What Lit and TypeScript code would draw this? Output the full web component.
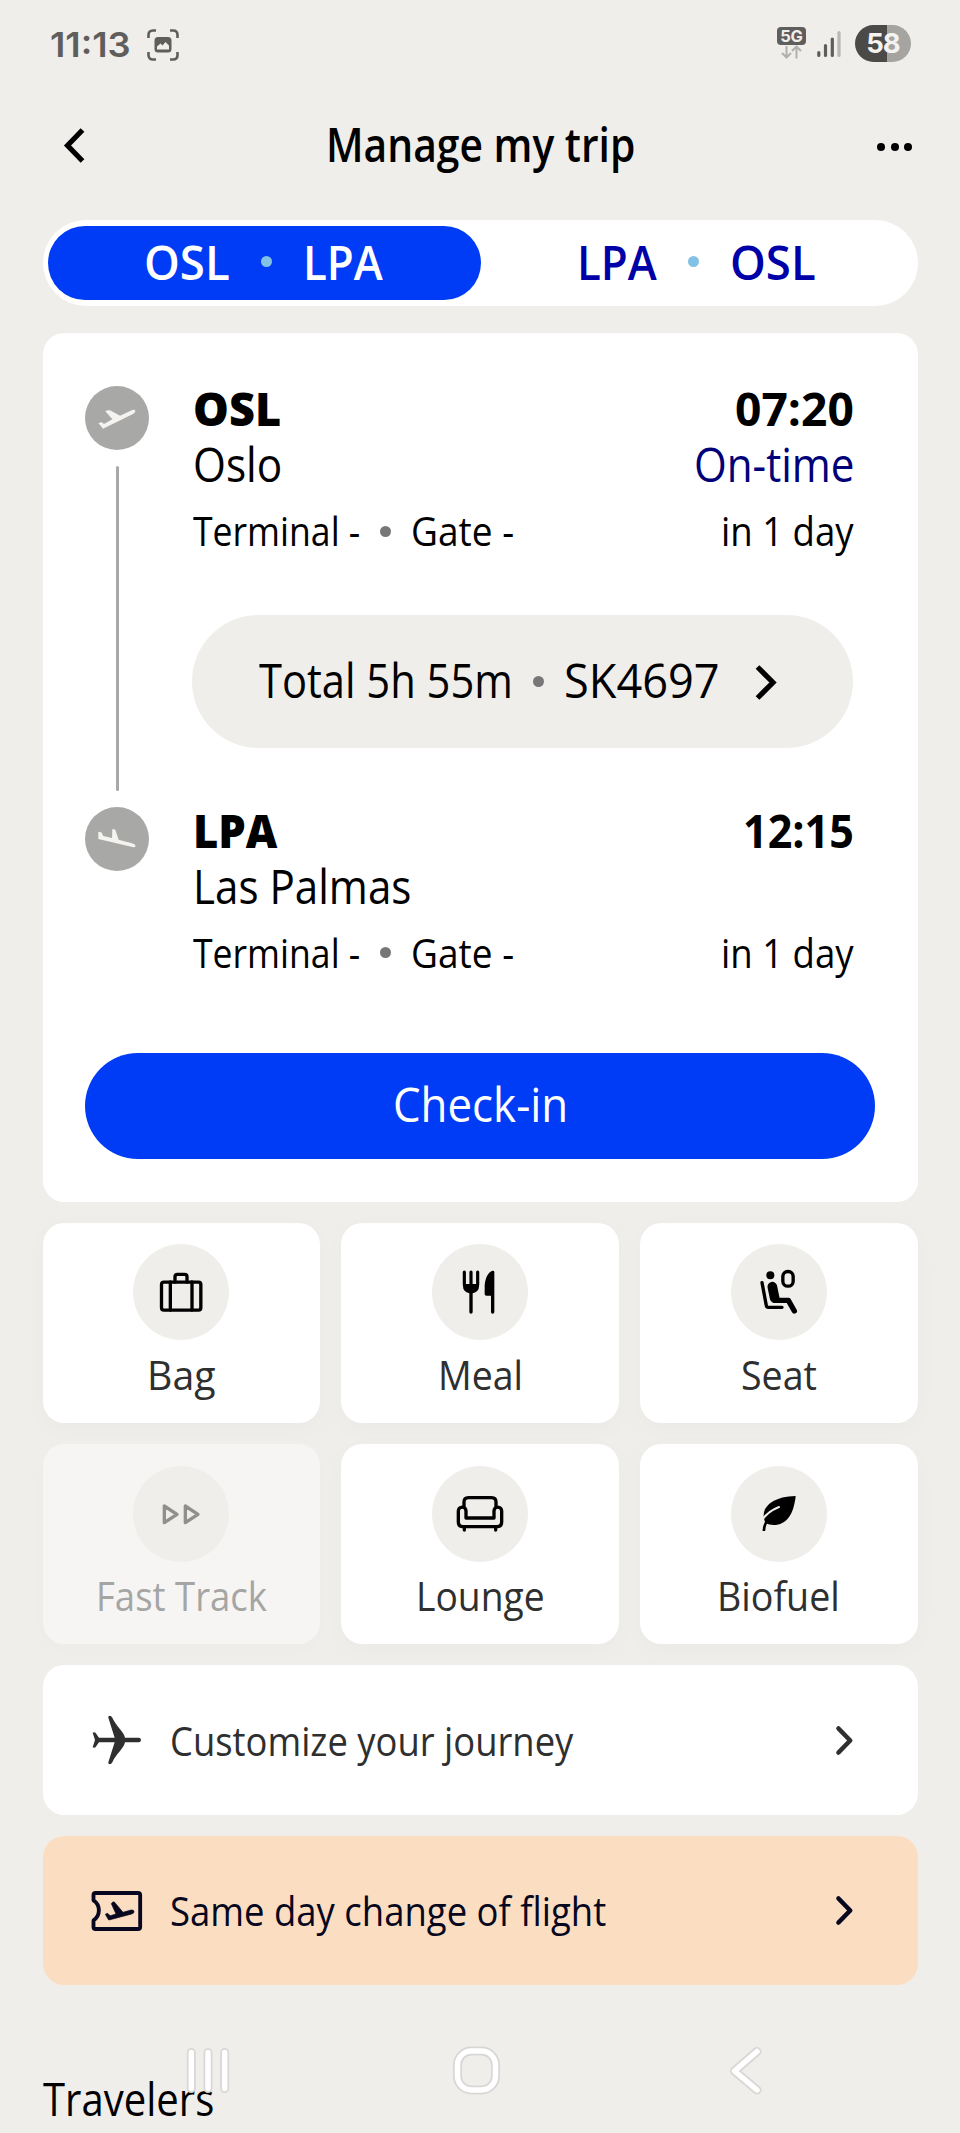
import { LitElement, html, svg, css } from "lit";
import { customElement, property } from "lit/decorators.js";
import { classMap } from "lit/directives/class-map.js";

const base = css`
  * { box-sizing: border-box; }
  svg { display: block; overflow: visible; }
`;

const stroke = (d: string, w: number) =>
  svg`<path d=${d} fill="none" stroke="currentColor" stroke-width=${w} stroke-linecap="round" stroke-linejoin="round"/>`;

// All glyphs share a coordinate system centred on 0,0 with three units per pixel.
const ICONS: Record<string, unknown> = {
  bag: svg`<rect x="-58.5" y="-29.5" width="118" height="84" rx="7" fill="none" stroke="currentColor" stroke-width="10"/>
    ${stroke("M-18 -30V-46Q-18 -53 -11 -53H11Q18 -53 18 -46V-30M-32 -30V54M33 -30V54", 10)}`,
  meal: svg`${stroke("M-47 -60V-22M-27 -60V-22M-7 -60V-22", 9.5)}
    <path d="M-51 -24H-3V-17Q-3 0 -22 3.500V60Q-22 65 -27 65Q-32 65 -32 60V3.500Q-51 0 -51 -17Z" fill="currentColor"/>
    <path d="M43 -60Q43 -64 38 -64C23 -60 14 -38 14 -15V6Q14 11 19 11H33V60Q33 65 38 65Q43 65 43 60Z" fill="currentColor"/>`,
  seat: svg`<circle cx="-26" cy="-50" r="12" fill="currentColor"/>
    <rect x="11.500" y="-61.500" width="31" height="44" rx="15" fill="none" stroke="currentColor" stroke-width="10"/>
    ${stroke("M-51 -28L-38 41Q-37 46 -32 46H9", 10)}
    ${stroke("M-20 -16L-13 18", 29)}
    ${stroke("M-14 25H28L46 57", 16)}`,
  track: svg`${stroke("M-50 -24V26L-12 1ZM13 -24V26L51 1Z", 10)}`,
  lounge: svg`${stroke("M-48 -21V-36Q-48 -49 -35 -49H35Q48 -49 48 -36V-21", 10)}
    ${stroke("M-42 12V-9A11.500 11.500 0 0 0 -65 -9V24Q-65 38 -51 38H51Q65 38 65 24V-9A11.500 11.500 0 0 0 42 -9V12Z", 10)}
    ${stroke("M-47 40V48M47 40V48", 10)}`,
  leaf: svg`<path d="M50 -54C44 2 22 33 -16 33Q-30 33 -40 28C-62 -16 -22 -53 50 -54Z" fill="currentColor"/>
    <path d="M-54 24C-42 2 -18 -14 0 -21" fill="none" stroke="#f0eeeb" stroke-width="6" stroke-linecap="round"/>
    <path d="M-45.500 51C-45 38 -42 28 -34 18" fill="none" stroke="currentColor" stroke-width="8"/>`,
  plane: svg`<path fill="currentColor" d="M-54 -7H-7L-26 -67Q-27 -73 -22 -73Q-17 -73 -14 -67C-3 -42 21 -25 24 -7H65A7 7 0 0 1 65 7H24C21 25 -3 42 -14 67Q-17 73 -22 73Q-27 73 -26 67L-7 7H-54L-64 21Q-68 25 -73 22L-66 0L-73 -22Q-68 -25 -64 -21Z"/>`,
  ticket: svg`${stroke("M-70.500 -32V-48Q-70.500 -54 -64 -54H63Q69.500 -54 69.500 -48V48Q69.500 54 63 54H-64Q-70.500 54 -70.500 48V28C-49 14 -49 -18 -70.500 -32Z", 11.5)}
    <path fill="currentColor" stroke="currentColor" stroke-width="2" d="M-35 10L-29 7L-20 14L-3 9L-17 -22Q-13 -29 -8 -27L18 4L42 -3Q50 -4 51 1Q52 7 44 9L-24 27Q-28 25 -28 22Z"/>`,
  takeoff: svg`<path fill="currentColor" d="M-56 15L-45 13L-39 18L-14 4L-35 -20Q-28 -25 -21 -23L9 -7L46 -24Q56 -26 55 -20Q54 -15 48 -12L-42 32Z"/>`,
  landing: svg`<path fill="currentColor" d="M-56 -22L-47 -20L-41 -9L-15 -3L-14 -29Q-9 -31 -5 -27L5 2L45 13Q56 17 56 21Q54 26 46 24L-56 0Z"/>`,
};

// A single line of text set narrow or wide so that it fills the given width.
@customElement("fit-text")
class FitText extends LitElement {
  @property({ type: Number }) width = 0;
  @property() text = "";
  static styles = css`
    :host { display: block; flex: none; }
    .box { display: block; }
    .line { display: inline-block; white-space: nowrap; transform-origin: 0 50%; vertical-align: top; }
  `;
  render() {
    return html`<span class="box" style="width:${this.width}px"><span class="line">${this.text}</span></span>`;
  }
  updated() {
    const line = this.renderRoot.querySelector(".line") as HTMLElement;
    const natural = line.offsetWidth;
    if (natural) line.style.transform = `scaleX(${this.width / natural})`;
  }
}

const fit = (text: string, width: number) => html`<fit-text .text=${text} .width=${width}></fit-text>`;

@customElement("trip-icon")
class TripIcon extends LitElement {
  @property() name = "";
  static styles = [base, css`:host { display: block; width: 96px; height: 96px; }`];
  render() {
    return html`<svg width="96" height="96" viewBox="-144 -144 288 288">${ICONS[this.name]}</svg>`;
  }
}

@customElement("status-bar")
class StatusBar extends LitElement {
  static styles = [base, css`
    :host { display: flex; justify-content: space-between; align-items: flex-start; height: 102px; padding: 25px 49px 0 50px; color: #5f5e5c; font-family: Inter, sans-serif; }
    .side { display: flex; align-items: flex-start; }
    .time { font-size: 34.500px; font-weight: 600; line-height: 40px; width: 97px; }
    .shot { margin-top: 4px; }
    .net { width: 29px; margin-top: 2px; }
    .five { height: 18px; border-radius: 4px; background: #5f5e5c; color: #f0eeeb; font-size: 16.500px; font-weight: 700; line-height: 18px; text-align: center; letter-spacing: -0.300px; }
    .signal { margin: 5px 0 0 11px; }
    .battery { width: 56px; height: 37px; margin-left: 14px; border-radius: 19px; background: linear-gradient(90deg, #4b4a48 57%, #a5a4a1 57%); color: #f4f3f0; font-size: 27.500px; font-weight: 700; line-height: 37px; text-align: center; letter-spacing: -1px; }
  `];
  render() {
    return html`
      <div class="side">
        <div class="time">${fit("11:13", 81)}</div>
        <svg class="shot" width="32" height="32" viewBox="0 0 32 32">
          <path d="M1.500 9V6Q1.500 1.500 6 1.500H9M23 1.500H26Q30.500 1.500 30.500 6V9M30.500 23V26Q30.500 30.500 26 30.500H23M9 30.500H6Q1.500 30.500 1.500 26V23" fill="none" stroke="#5f5e5c" stroke-width="2.600"/>
          <rect x="7.500" y="8" width="17" height="15.500" rx="3.500" fill="#5f5e5c"/>
          <path d="M10 20.500V17.500L13.500 14.500L15.500 16.500L18.500 13L22 16.500V20.500Z" fill="#f0eeeb"/>
        </svg>
      </div>
      <div class="side">
        <div class="net">
          <div class="five">5G</div>
          <svg width="29" height="14" viewBox="0 0 29 14">
            <path d="M9.500 1V12M5 8L9.500 12.500L14 8M19.500 13.500V2M15 6L19.500 1.500L24 6" fill="none" stroke="#b1b0ad" stroke-width="2"/>
          </svg>
        </div>
        <svg class="signal" width="24" height="28" viewBox="0 0 24 28">
          <g stroke-width="3.200" stroke-linecap="round">
            <path d="M1.800 22.500V25.500M8.500 15.500V25.500M15.300 9V25.500" stroke="#5f5e5c"/>
            <path d="M22 2.500V25.500" stroke="#b9b8b5"/>
          </g>
        </svg>
        <div class="battery">58</div>
      </div>`;
  }
}

@customElement("trip-stop")
class TripStop extends LitElement {
  @property({ type: Object }) stop: any = {};
  static styles = [base, css`
    :host { display: flex; height: 177px; }
    .disc { width: 64px; height: 64px; margin: 5.500px 43.500px 0 0; display: flex; align-items: center; justify-content: center; border-radius: 50%; background: #a8a8a7; color: #f4f3ef; flex: none; }
    .rows { width: 661px; }
    .row { display: flex; justify-content: space-between; align-items: center; height: 56px; line-height: 56px; font-size: 46.600px; }
    .code { font-weight: 800; }
    .time { font-weight: 700; }
    .status { color: #000078; }
    .meta { height: 54px; line-height: 54px; font-size: 41px; margin-top: 11px; }
    .where { display: flex; align-items: center; }
    .dot { width: 11px; height: 11px; border-radius: 50%; background: #777; margin: 2px 20px 0 20px; }
  `];
  render() {
    const s = this.stop;
    return html`
      <div class="disc"><trip-icon name=${s.icon}></trip-icon></div>
      <div class="rows">
        <div class="row"><div class="code">${fit(s.code[0], s.code[1])}</div><div class="time">${fit(s.time[0], s.time[1])}</div></div>
        <div class="row">${fit(s.city[0], s.city[1])}${s.status ? html`<div class="status">${fit(s.status[0], s.status[1])}</div>` : ""}</div>
        <div class="row meta">
          <div class="where">${fit("Terminal -", 167.5)}<i class="dot"></i>${fit("Gate -", 103)}</div>
          ${fit("in 1 day", 133)}
        </div>
      </div>`;
  }
}

@customElement("app-root")
class AppRoot extends LitElement {
  static styles = [base, css`
    :host { display: block; position: relative; width: 960px; height: 2133px; overflow: hidden; background: #f0eeeb; color: #000; font-family: "Open Sans", "Noto Sans", sans-serif; }
    .head { display: grid; grid-template-columns: 150px 1fr 150px; align-items: center; justify-items: start; height: 86px; padding: 0 48px 0 64px; }
    .title { font-size: 46.600px; font-weight: 600; line-height: 60px; justify-self: center; margin: -2px 15px 0 0; }
    .more { display: flex; gap: 5.300px; justify-self: end; margin-top: 4px; }
    .more i { width: 8px; height: 8px; border-radius: 50%; background: #000; }
    .tabs { display: flex; margin: 32px 42.500px 0; height: 85.500px; padding: 5.500px; border-radius: 43px; background: #fff; }
    .tab { flex: 1; display: flex; align-items: center; justify-content: center; border-radius: 38px; font-size: 46.600px; font-weight: 600; line-height: 74px; color: #0000a8; padding-bottom: 2px; }
    .tab.on { background: #003cf6; color: #fff; padding-right: 2px; }
    .tab i { width: 11px; height: 11px; margin: 0 31px; border-radius: 50%; background: #82c2e4; }
    .card { margin: 27px 42.500px 0; height: 869px; padding: 47.500px 42.500px 0; border-radius: 21.300px; background: #fff; }
    .between { display: flex; height: 244.500px; }
    .rail { width: 2.700px; height: 325px; margin: -91.500px 73.500px 0 31px; border-radius: 2px; background: #a8a8a7; flex: none; }
    .flight { display: flex; align-items: center; width: 661px; height: 133px; margin-top: 58px; padding: 0 76px 4px 67px; border-radius: 67px; background: #f0eeeb; font-size: 46.600px; line-height: 60px; }
    .flight i { width: 11px; height: 11px; border-radius: 50%; background: #777; margin: 4px 20.500px 0 19.500px; }
    .flight svg { margin: 5px 0 0 auto; }
    .checkin { display: flex; align-items: center; justify-content: center; height: 106.600px; margin-top: 74px; padding-bottom: 4px; border-radius: 54px; background: #003cf6; color: #fff; font-size: 46.600px; font-weight: 500; line-height: 60px; }
    .grid { display: grid; grid-template-columns: repeat(3, 1fr); gap: 21.300px; margin: 21.300px 42.500px 0; }
    .tile { height: 200px; padding-top: 21.500px; display: flex; flex-direction: column; align-items: center; border-radius: 21.300px; background: #fff; font-size: 41px; line-height: 54px; color: #2f2f30; box-shadow: 0 6px 24px rgba(0, 0, 0, 0.022); }
    .tile.off { background: #f6f5f4; color: #a5a5a4; box-shadow: 0 6px 24px rgba(0, 0, 0, 0.012); }
    .round { width: 96px; height: 96px; margin-bottom: 6.500px; border-radius: 50%; background: #f0eeeb; color: #000; }
    .tile.off .round { color: #8f8f8e; }
    .link { display: flex; align-items: center; height: 149.300px; margin: 21.300px 42.500px 0; padding: 0 64.500px 0 26.500px; border-radius: 21.300px; background: #fff; color: #2f2f30; font-size: 41px; line-height: 54px; }
    .link.warm { background: #fbdec1; color: #070720; }
    .name { margin: -1px auto 0 5px; }
    .people { margin: 83px 0 0 42.500px; font-size: 46px; line-height: 60px; }
    .system { position: absolute; left: 0; top: 2040px; }
  `];

  render() {
    const tiles: [string, string, number, boolean][] = [
      ["bag", "Bag", 69, false], ["meal", "Meal", 85, false], ["seat", "Seat", 76, false],
      ["track", "Fast Track", 171, true], ["lounge", "Lounge", 129, false], ["leaf", "Biofuel", 123, false],
    ];
    const links: [string, string, number, boolean][] = [
      ["plane", "Customize your journey", 403, false],
      ["ticket", "Same day change of flight", 436, true],
    ];
    const from = { code: ["OSL", 88], city: ["Oslo", 89], time: ["07:20", 119], status: ["On-time", 160], icon: "takeoff" };
    const to = { code: ["LPA", 84], city: ["Las Palmas", 218], time: ["12:15", 111], icon: "landing" };
    return html`
      <status-bar></status-bar>
      <div class="head">
        <svg width="21" height="35" viewBox="0 0 21 35"><path d="M18.500 2L3.500 17.500L18.500 33" fill="none" stroke="#000" stroke-width="5.200"/></svg>
        <div class="title">${fit("Manage my trip", 309)}</div>
        <div class="more"><i></i><i></i><i></i></div>
      </div>
      <div class="tabs">
        <div class="tab on">${fit("OSL", 86)}<i></i>${fit("LPA", 80)}</div>
        <div class="tab">${fit("LPA", 80)}<i></i>${fit("OSL", 86)}</div>
      </div>
      <section class="card">
        <trip-stop .stop=${from}></trip-stop>
        <div class="between">
          <div class="rail"></div>
          <div class="flight">
            ${fit("Total 5h 55m", 254)}<i></i>${fit("SK4697", 156)}
            <svg width="22" height="35" viewBox="0 0 22 35"><path d="M2.500 2L18 17.500L2.500 33" fill="none" stroke="#000" stroke-width="5.200"/></svg>
          </div>
        </div>
        <trip-stop .stop=${to}></trip-stop>
        <div class="checkin">${fit("Check-in", 175)}</div>
      </section>
      <div class="grid">
        ${tiles.map(([icon, label, width, off]) => html`
          <div class=${classMap({ tile: true, off })}>
            <div class="round"><trip-icon name=${icon}></trip-icon></div>
            ${fit(label, width)}
          </div>`)}
      </div>
      ${links.map(([icon, label, width, warm]) => html`
        <div class=${classMap({ link: true, warm })}>
          <trip-icon name=${icon}></trip-icon>
          <div class="name">${fit(label, width)}</div>
          <svg width="17" height="29" viewBox="0 0 17 29"><path d="M2.500 2.500L14.200 14.500L2.500 26.500" fill="none" stroke="currentColor" stroke-width="4.600" stroke-linecap="round" stroke-linejoin="round"/></svg>
        </div>`)}
      <div class="people">${fit("Travelers", 171.5)}</div>
      <svg class="system" width="960" height="93" viewBox="0 0 960 93" fill="none" stroke-linecap="round" stroke-linejoin="round">
        <g stroke="#d9d7d5" stroke-width="9">
          <path d="M191.300 12.500V48.500M208 12.500V48.500M224.700 12.500V48.500M757 11.500L734.500 31L757 50"/>
          <rect x="457.500" y="11" width="38" height="39" rx="14"/>
        </g>
        <g stroke="#fff" stroke-width="5.500">
          <path d="M191.300 12.500V48.500M208 12.500V48.500M224.700 12.500V48.500M757 11.500L734.500 31L757 50"/>
          <rect x="457.500" y="11" width="38" height="39" rx="14"/>
        </g>
      </svg>`;
  }
}
